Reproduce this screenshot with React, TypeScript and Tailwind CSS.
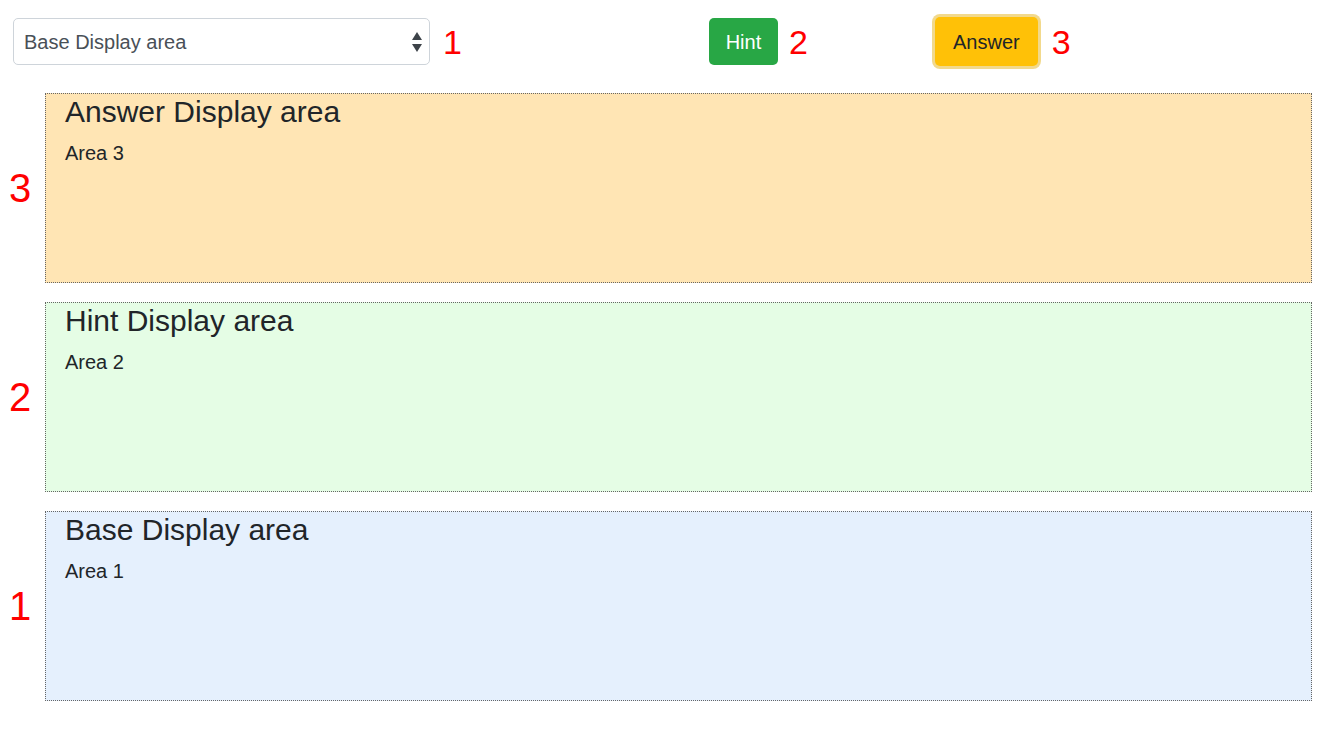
import React from "react";

const areas = [
  { title: "Answer Display area", body: "Area 3", n: "3", bg: "bg-[#ffe5b4]" },
  { title: "Hint Display area", body: "Area 2", n: "2", bg: "bg-[#e5fde5]" },
  { title: "Base Display area", body: "Area 1", n: "1", bg: "bg-[#e5f0fd]" },
];

export default function App() {
  return (
    <div className="w-[1320px] h-[738px] bg-white font-['Liberation_Sans'] pt-[18px] overflow-hidden">
      <div className="flex items-center h-[47px] pl-[13px]">
        <div className="w-[417px] h-[47px] border border-[#ced4da] rounded-[5px] flex items-center justify-between pl-[10px] pr-[6px] text-[20px] text-[#495057]">
          <span>Base Display area</span>
          <svg width="12" height="24" viewBox="0 0 12 24">
            <path d="M6 2 L11 10 L1 10 Z" fill="#3d4349" />
            <path d="M6 22 L11 14 L1 14 Z" fill="#3d4349" />
          </svg>
        </div>
        <span className="ml-[13px] text-[34px] leading-none text-[#ff0000]">1</span>
        <button className="ml-[247px] w-[69px] h-[47px] rounded-[5px] bg-[#28a745] text-white text-[20px] flex items-center justify-center">
          Hint
        </button>
        <span className="ml-[11px] text-[34px] leading-none text-[#ff0000]">2</span>
        <button className="ml-[127px] w-[103px] h-[49px] rounded-[5px] bg-[#ffc107] text-[#212529] text-[20px] flex items-center justify-center ring-[3px] ring-[#f2d98c]">
          Answer
        </button>
        <span className="ml-[14px] text-[34px] leading-none text-[#ff0000]">3</span>
      </div>
      <div className="flex flex-col gap-[19px] mt-[28px]">
        {areas.map((a) => (
          <div key={a.n} className="flex items-center">
            <div className="w-[45px] pl-[9px] text-[40px] leading-none text-[#ff0000]">{a.n}</div>
            <div className={`w-[1267px] h-[190px] border border-dotted border-[#666666] ${a.bg} pl-[19px] pt-[3px] text-[#212529]`}>
              <div className="text-[30px] leading-[30px]">{a.title}</div>
              <div className="mt-[16px] text-[20px] leading-[20px]">{a.body}</div>
            </div>
          </div>
        ))}
      </div>
    </div>
  );
}
